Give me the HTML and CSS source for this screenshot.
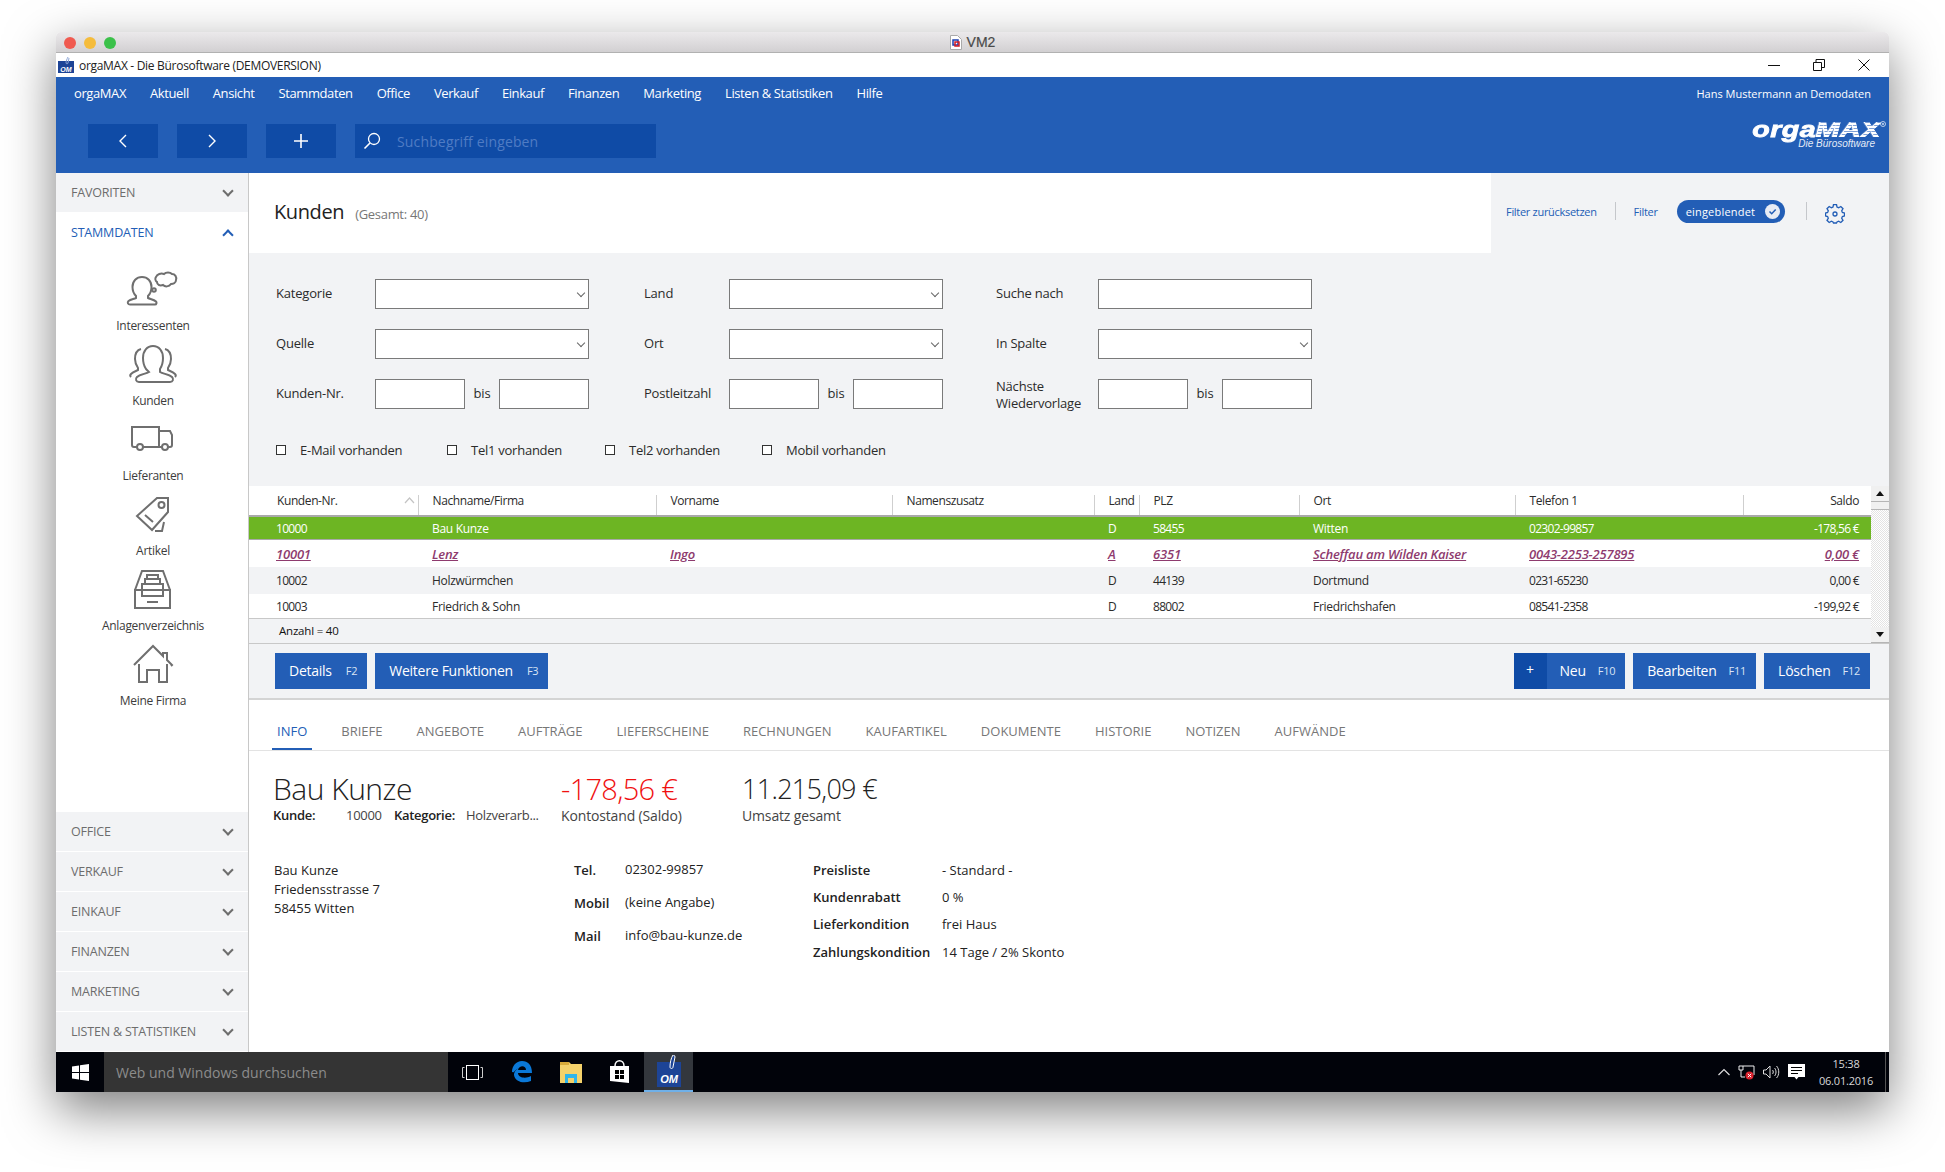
FILE: index.html
```html
<!DOCTYPE html>
<html lang="de">
  <head>
    <meta charset="UTF-8" />
    <title>orgaMAX - Kunden</title>
    <link rel="stylesheet" href="styles.css">
  </head>

  <body>
    <div class="window">
      <div class="mac-bar">
        <div class="lights">
          <span class="light red"></span>
          <span class="light yellow"></span>
          <span class="light green"></span>
        </div>
        <div class="mac-title">
          <svg width="12" height="15" viewBox="0 0 12 15"><path d="M.5.5h7l4 4v10H.5z" fill="#fff" stroke="#aaa"/><rect x="3" y="5" width="5" height="5" fill="none" stroke="#1d3fb0" stroke-width="1.5"/><rect x="5" y="7" width="4" height="4" fill="none" stroke="#d01c24" stroke-width="1.5"/></svg>
          VM2
        </div>
      </div>

      <div class="app-title">
        <svg class="app-logo" width="16" height="16" viewBox="0 0 16 16"><rect y="4" width="16" height="12" fill="#1d4496"/><path d="M10 0c-1 2-2 4-2 6 0 1 2 1 2 0l1-5" stroke="#8ea6d6" fill="none"/><text x="8" y="14.500" text-anchor="middle" class="om-text small">OM</text></svg>
        <span>orgaMAX - Die Bürosoftware (DEMOVERSION)</span>
        <div class="win-controls">
          <svg width="12" height="12" viewBox="0 0 12 12"><path d="M0 6.500h12" stroke="#111" fill="none"/></svg>
          <svg width="12" height="12" viewBox="0 0 12 12"><path d="M.5 3.500h8v8h-8zM3 3.500V.5h8.500v8H8.500" stroke="#111" fill="none"/></svg>
          <svg width="12" height="12" viewBox="0 0 12 12"><path d="M.5.5l11 11M11.500.5l-11 11" stroke="#111" fill="none"/></svg>
        </div>
      </div>

      <header class="app-header">
        <nav class="menu">
          <a>orgaMAX</a>
          <a>Aktuell</a>
          <a>Ansicht</a>
          <a>Stammdaten</a>
          <a>Office</a>
          <a>Verkauf</a>
          <a>Einkauf</a>
          <a>Finanzen</a>
          <a>Marketing</a>
          <a>Listen &amp; Statistiken</a>
          <a>Hilfe</a>
          <span class="user">Hans Mustermann an Demodaten</span>
        </nav>
        <div class="tools">
          <button class="tool-btn"><svg width="10" height="16" viewBox="0 0 10 16"><path d="M8 2L2 8l6 6" stroke="#fff" stroke-width="1.400" fill="none"/></svg></button>
          <button class="tool-btn"><svg width="10" height="16" viewBox="0 0 10 16"><path d="M2 2l6 6-6 6" stroke="#fff" stroke-width="1.400" fill="none"/></svg></button>
          <button class="tool-btn"><svg width="14" height="14" viewBox="0 0 14 14"><path d="M7 0v14M0 7h14" stroke="#fff" stroke-width="1.600" fill="none"/></svg></button>
          <div class="search">
            <svg width="18" height="18" viewBox="0 0 18 18"><circle cx="11" cy="7" r="5.500" stroke="#fff" stroke-width="1.300" fill="none"/><path d="M7 11l-5.500 5.500" stroke="#fff" stroke-width="1.600" fill="none"/></svg>
            <span>Suchbegriff eingeben</span>
          </div>
          <div class="brand">
            <div class="brand-name">orga<span>MAX</span></div>
            <div class="brand-sub">Die Bürosoftware</div>
            <svg class="brand-reg" width="6" height="6" viewBox="0 0 6 6"><circle cx="3" cy="3" r="2.500" fill="none" stroke="#dfe8f6" stroke-width=".8"/><circle cx="3" cy="3" r=".9" fill="#dfe8f6"/></svg>
          </div>
        </div>
      </header>

      <div class="workspace">
        <aside class="sidebar">
          <div class="side-group">
            <div class="side-head">FAVORITEN <i class="chev"></i></div>
            <div class="side-head open">STAMMDATEN <i class="chev up"></i></div>
            <div class="side-items">
              <a class="side-item">
                <svg class="side-icon" viewBox="0 0 64 48"><path d="M15 30c-2-2-3.500-5-3.500-9 0-6 4-10 9.500-10s9.500 4 9.500 10c0 4-1.500 7-3.500 9v2c2 1 6 1.500 8 3.500 1 1 .5 3-1 3H9c-2 0-3-2-1.500-3.500C9.500 33.500 13 33 15 32z"/><path d="M35 11c1-3 5-4 8-3 2-2 6-2 8 0 3 0 5 3 4 6 0 3-3 4-5 4-2 3-6 3-8 1-3 1-6 0-6-3-2-1-2-4-1-5z"/><circle cx="33" cy="24" r="1.800"/></svg>
                <span>Interessenten</span>
              </a>
              <a class="side-item">
                <svg class="side-icon" viewBox="0 0 64 48"><path d="M25 28c-2-3-3-6-3-11 0-7 4-12 10-12s10 5 10 12c0 5-1 8-3 11v3c3 2 9 2 12 5 2 2 1 5-2 5H18c-3 0-4-3-2-5 3-3 9-3 12-5z"/><path d="M20 8c-4 1-6 5-6 10 0 4 1 6 3 9v2c-2 1-5 2-7 4-1 1-1 2 0 3"/><path d="M44 8c4 1 6 5 6 10 0 4-1 6-3 9v2c2 1 5 2 7 4 1 1 1 2 0 3"/></svg>
                <span>Kunden</span>
              </a>
              <a class="side-item">
                <svg class="side-icon" viewBox="0 0 64 48"><path d="M16 31h-3c-1 0-2-1-2-2V11h27v20H22"/><path d="M38 15h11l2 4v10c0 1-1 2-2 2h-2M41 31h-19M38 31h3"/><circle cx="19" cy="31" r="3"/><circle cx="44" cy="31" r="3"/></svg>
                <span>Lieferanten</span>
              </a>
              <a class="side-item">
                <svg class="side-icon" viewBox="0 0 64 48"><path d="M36 7h11v14L31 39 16 25z"/><circle cx="40.500" cy="14" r="3"/><path d="M24 24l8 7M34 40h7l2-9"/></svg>
                <span>Artikel</span>
              </a>
              <a class="side-item">
                <svg class="side-icon" viewBox="0 0 64 48"><path d="M14 24h35v18H14zM14 24l7-19h21l7 19"/><path d="M21 24v-6h21v6M24 18v-5h15v5M26 13V9h11v4M21 24v6h21v-6M26 36h11"/></svg>
                <span>Anlagenverzeichnis</span>
              </a>
              <a class="side-item">
                <svg class="side-icon" viewBox="0 0 64 48"><path d="M18 23v18h8V29h12v12h8V23"/><path d="M13 24L32 5l10 10v-3h4v7l5 5-1 1"/></svg>
                <span>Meine Firma</span>
              </a>
            </div>
          </div>
          <div class="side-group">
            <div class="side-head">OFFICE <i class="chev"></i></div>
            <div class="side-head">VERKAUF <i class="chev"></i></div>
            <div class="side-head">EINKAUF <i class="chev"></i></div>
            <div class="side-head">FINANZEN <i class="chev"></i></div>
            <div class="side-head">MARKETING <i class="chev"></i></div>
            <div class="side-head">LISTEN &amp; STATISTIKEN <i class="chev"></i></div>
          </div>
        </aside>

        <main class="content">
          <div class="page-head">
            <div class="page-title">
              <h1>Kunden</h1>
              <span>(Gesamt: 40)</span>
            </div>
            <div class="page-tools">
              <a>Filter zurücksetzen</a>
              <i class="sep"></i>
              <a class="filter-link">Filter</a>
              <span class="pill">eingeblendet
                <svg width="15" height="15" viewBox="0 0 15 15"><circle cx="7.500" cy="7.500" r="7.500" fill="#e8ecf4"/><path d="M4.500 7.500l2.200 2.200 4-4.200" stroke="#235eb6" stroke-width="1.500" fill="none"/></svg>
              </span>
              <i class="sep second"></i>
              <svg class="gear" width="20" height="20" viewBox="0 0 20 20"><path d="M8.500 1h3l.5 2.500 1.600.7L15.800 3 18 5.200l-1.300 2.200.7 1.600 2.100.5v3l-2.100.5-.7 1.600L18 16.800 15.800 19l-2.200-1.300-1.600.7-.5 1.100h-3l-.5-1.100-1.600-.7L4.200 19 2 16.800l1.300-2.200-.7-1.600-2.100-.5v-3l2.100-.5.7-1.600L2 5.200 4.200 3l2.200 1.200L8 3.500z" transform="translate(0 -.5)" stroke="#235eb6" stroke-width="1.300" fill="none"/><circle cx="10" cy="10" r="2" stroke="#235eb6" stroke-width="1.300" fill="none"/></svg>
            </div>
          </div>

          <form class="filter">
            <div class="filter-grid">
              <label>Kategorie</label>
              <div class="select"><select></select></div>
              <i></i>
              <label>Land</label>
              <div class="select"><select></select></div>
              <i></i>
              <label>Suche nach</label>
              <input type="text" />

              <label>Quelle</label>
              <div class="select"><select></select></div>
              <i></i>
              <label>Ort</label>
              <div class="select"><select></select></div>
              <i></i>
              <label>In Spalte</label>
              <div class="select"><select></select></div>

              <label>Kunden-Nr.</label>
              <div class="range"><input type="text" /><span>bis</span><input type="text" /></div>
              <i></i>
              <label>Postleitzahl</label>
              <div class="range"><input type="text" /><span>bis</span><input type="text" /></div>
              <i></i>
              <label class="two-lines">Nächste Wiedervorlage</label>
              <div class="range"><input type="text" /><span>bis</span><input type="text" /></div>
            </div>
            <div class="checks">
              <label><i class="box"></i>E-Mail vorhanden</label>
              <label><i class="box"></i>Tel1 vorhanden</label>
              <label><i class="box"></i>Tel2 vorhanden</label>
              <label><i class="box"></i>Mobil vorhanden</label>
            </div>
          </form>

          <div class="grid-wrap">
            <div class="grid-main">
              <table class="grid">
                <colgroup>
                  <col class="c1" /><col class="c2" /><col class="c3" /><col class="c4" /><col class="c5" /><col class="c6" /><col class="c7" /><col class="c8" /><col class="c9" />
                </colgroup>
                <thead>
                  <tr>
                    <th>Kunden-Nr.<svg class="sort" width="11" height="7" viewBox="0 0 11 7"><path d="M1 6l4.500-5L10 6" stroke="#c4c4c4" stroke-width="1.200" fill="none"/></svg></th>
                    <th>Nachname/Firma</th>
                    <th>Vorname</th>
                    <th>Namenszusatz</th>
                    <th>Land</th>
                    <th>PLZ</th>
                    <th>Ort</th>
                    <th>Telefon 1</th>
                    <th class="num">Saldo</th>
                  </tr>
                </thead>
                <tbody>
                  <tr class="sel">
                    <td>10000</td><td>Bau Kunze</td><td></td><td></td><td>D</td><td>58455</td><td>Witten</td><td>02302-99857</td><td class="num">-178,56 €</td>
                  </tr>
                  <tr class="mark">
                    <td>10001</td><td>Lenz</td><td>Ingo</td><td></td><td>A</td><td>6351</td><td>Scheffau am Wilden Kaiser</td><td>0043-2253-257895</td><td class="num">0,00 €</td>
                  </tr>
                  <tr class="alt">
                    <td>10002</td><td>Holzwürmchen</td><td></td><td></td><td>D</td><td>44139</td><td>Dortmund</td><td>0231-65230</td><td class="num">0,00 €</td>
                  </tr>
                  <tr class="last">
                    <td>10003</td><td>Friedrich &amp; Sohn</td><td></td><td></td><td>D</td><td>88002</td><td>Friedrichshafen</td><td>08541-2358</td><td class="num">-199,92 €</td>
                  </tr>
                </tbody>
              </table>
              <div class="grid-foot">Anzahl = 40</div>
            </div>
            <div class="scrollbar">
              <div class="sb-btn"><i class="tri up"></i></div>
              <div class="sb-thumb"></div>
              <div class="sb-track"></div>
              <div class="sb-btn"><i class="tri"></i></div>
            </div>
          </div>

          <div class="actions">
            <div class="btn-group">
              <button class="btn">Details <small>F2</small></button>
              <button class="btn">Weitere Funktionen <small>F3</small></button>
            </div>
            <div class="btn-group end">
              <button class="btn btn-new"><b>+</b>Neu <small>F10</small></button>
              <button class="btn">Bearbeiten <small>F11</small></button>
              <button class="btn">Löschen <small>F12</small></button>
            </div>
          </div>

          <nav class="tabs">
            <a class="active">INFO</a>
            <a>BRIEFE</a>
            <a>ANGEBOTE</a>
            <a>AUFTRÄGE</a>
            <a>LIEFERSCHEINE</a>
            <a>RECHNUNGEN</a>
            <a>KAUFARTIKEL</a>
            <a>DOKUMENTE</a>
            <a>HISTORIE</a>
            <a>NOTIZEN</a>
            <a>AUFWÄNDE</a>
          </nav>

          <section class="detail">
            <div class="summary">
              <div class="sum-name">
                <h2>Bau Kunze</h2>
                <div class="sum-meta"><b>Kunde:</b><span>10000</span><b>Kategorie:</b><span>Holzverarb...</span></div>
              </div>
              <div class="sum-value balance">
                <strong>-178,56 €</strong>
                <span>Kontostand (Saldo)</span>
              </div>
              <div class="sum-value">
                <strong>11.215,09 €</strong>
                <span>Umsatz gesamt</span>
              </div>
            </div>
            <div class="facts">
              <div class="address">Bau Kunze<br />Friedensstrasse 7<br />58455 Witten</div>
              <dl class="contact">
                <dt>Tel.</dt><dd>02302-99857</dd>
                <dt>Mobil</dt><dd>(keine Angabe)</dd>
                <dt>Mail</dt><dd>info@bau-kunze.de</dd>
              </dl>
              <dl class="terms">
                <dt>Preisliste</dt><dd>- Standard -</dd>
                <dt>Kundenrabatt</dt><dd>0 %</dd>
                <dt>Lieferkondition</dt><dd>frei Haus</dd>
                <dt>Zahlungskondition</dt><dd>14 Tage / 2% Skonto</dd>
              </dl>
            </div>
          </section>
        </main>
      </div>

      <footer class="taskbar">
        <div class="start">
          <svg width="17" height="17" viewBox="0 0 17 17"><path d="M0 2.500l7-1v6.500H0zM8 1.300L17 0v8H8zM0 9h7v6.500l-7-1zM8 9h9v8l-9-1.300z" fill="#fff"/></svg>
        </div>
        <div class="task-search">Web und Windows durchsuchen</div>
        <div class="task-icons">
          <span class="task-icon"><svg width="21" height="15" viewBox="0 0 21 15"><rect x="4.500" y=".5" width="12" height="14" fill="none" stroke="#fff"/><path d="M2.500 2.500H.5v10h2M18.500 2.500h2v10h-2" fill="none" stroke="#ccc"/></svg></span>
          <span class="task-icon"><svg width="21" height="22" viewBox="0 0 21 22"><path d="M1 11C1 5 5 0 11 0c6 0 10 4 10 12H7c0 5 8 6 13 3v5c-7 3-16 1-17-6 0-2 1-5 5-7-2 1-4 2-5 4-.500.500-2 0-2 0zM7 9h8c0-5-7-5-8 0z" fill="#0a78d7"/></svg></span>
          <span class="task-icon"><svg width="22" height="22" viewBox="0 0 22 22"><path d="M0 1h9l2 2h11v19H0z" fill="#f4d26b"/><path d="M0 1h9v3H0z" fill="#d8ab3a"/><path d="M5 22v-9h12v9h-3v-5H8v5z" fill="#2fb5ea"/></svg></span>
          <span class="task-icon"><svg width="21" height="24" viewBox="0 0 21 24"><path d="M1 6h19v17l-19-2z" fill="#fff"/><path d="M6 6c0-7 9-7 9 0" fill="none" stroke="#fff" stroke-width="1.500"/><path d="M6 10h4v4H6zM11 10h4v4h-4zM6 15h4v4H6zM11 15h4v4h-4z" fill="#000"/></svg></span>
          <span class="task-icon current"><svg width="24" height="32" viewBox="0 0 24 32"><rect y="7" width="24" height="25" fill="#1d4496"/><path d="M16 0c-2 3-3 8-3 12 0 2 3 2 3 0l2-10c0-2-2-2-2-2z" fill="#1d4496" stroke="#fff"/><text x="12" y="28" text-anchor="middle" class="om-text">OM</text></svg></span>
        </div>
        <div class="tray">
          <svg width="12" height="8" viewBox="0 0 12 8"><path d="M.5 7L6 1.500 11.500 7" stroke="#ddd" stroke-width="1.200" fill="none"/></svg>
          <svg width="17" height="15" viewBox="0 0 17 15"><path d="M5 1h11v9M1 1h4v4H1zM3 5v7h4" stroke="#eee" fill="none"/><circle cx="11.500" cy="10.500" r="4" fill="#d9202c"/><path d="M9.800 8.800l3.400 3.400M13.200 8.800l-3.400 3.400" stroke="#fff"/></svg>
          <svg width="17" height="14" viewBox="0 0 17 14"><path d="M.5 5h2.500l4-4v12l-4-4H.5zM9.500 5c1 1 1 3 0 4M11.500 3c2 2 2 6 0 8M13.500 1c3 3 3 9 0 12" stroke="#ddd" fill="none"/></svg>
          <svg width="17" height="16" viewBox="0 0 17 16"><path d="M0 0h17v13h-6.500l-2 2.500-2-2.500H0z" fill="#fff"/><path d="M3 3.500h11M3 6.500h11M3 9.500h7" stroke="#000"/></svg>
          <div class="clock">15:38<br />06.01.2016</div>
          <i class="show-desktop"></i>
        </div>
      </footer>
    </div>
  </body>
</html>
```

FILE: styles.css
```css
* {
  box-sizing: border-box;
}

html,
body {
  height: 100%;
  overflow: hidden;
}

body {
  margin: 0;
  padding: 32px 56px 0;
  background: #fff;
  font-family: "Open Sans", "Noto Sans", sans-serif;
  font-size: 12px;
  color: #2b2b2b;
}

.window {
  width: 1833px;
  height: 1060px;
  display: flex;
  flex-direction: column;
  border-radius: 5px 5px 0 0;
  box-shadow: 0 18px 50px rgba(0, 0, 0, 0.5);
}

/* mac title bar */
.mac-bar {
  height: 21px;
  flex: none;
  display: flex;
  align-items: center;
  justify-content: center;
  border-radius: 5px 5px 0 0;
  border-bottom: 1px solid #b1b1b1;
  background: linear-gradient(#ebe9eb, #d2d0d2);
  position: relative;
}

.lights {
  position: absolute;
  left: 8px;
  top: 5px;
  display: flex;
  gap: 8px;
}

.light {
  width: 12px;
  height: 12px;
  border-radius: 50%;
}

.red {
  background: #f05a50;
}

.yellow {
  background: #f5bc3c;
}

.green {
  background: #3bc14a;
}

.mac-title {
  display: flex;
  align-items: center;
  gap: 5px;
  font-family: "Liberation Sans", sans-serif;
  font-size: 14px;
  color: #4a4a4a;
  -webkit-text-stroke: 0.2px #4a4a4a;
}

/* windows title bar */
.app-title {
  height: 24px;
  flex: none;
  display: flex;
  align-items: center;
  padding-left: 2px;
  gap: 5px;
  background: #fff;
  font-size: 12px;
  letter-spacing: -0.3px;
  color: #222;
}

.om-text {
  font-family: "Liberation Sans", sans-serif;
  font-size: 11px;
  font-weight: bold;
  font-style: italic;
  fill: #fff;
  letter-spacing: 0;
}

.om-text.small {
  font-size: 7px;
}

.win-controls {
  margin-left: auto;
  display: flex;
  gap: 33px;
  padding-right: 19px;
}

/* blue header */
.app-header {
  height: 96px;
  flex: none;
  background: #235eb6;
  color: #fff;
}

.menu {
  height: 47px;
  display: flex;
  align-items: center;
  padding: 0 18px 15px;
  gap: 24px;
  font-size: 13px;
  letter-spacing: -0.4px;
}

.user {
  margin-left: auto;
  font-size: 11px;
  letter-spacing: 0;
}

.tools {
  display: flex;
  gap: 19px;
  padding-left: 32px;
  align-items: flex-start;
}

.tool-btn {
  width: 70px;
  height: 34px;
  border: 0;
  padding: 0;
  background: #0f4ba6;
  display: flex;
  align-items: center;
  justify-content: center;
}

.search {
  width: 301px;
  height: 34px;
  background: #0f4ba6;
  display: flex;
  align-items: center;
  gap: 16px;
  padding-left: 8px;
  color: #4f7cc4;
  font-size: 14px;
  letter-spacing: 0.15px;
}

.brand {
  margin-left: auto;
  padding-right: 8px;
  margin-top: -3px;
  text-align: right;
  font-family: "Liberation Sans", sans-serif;
  font-style: italic;
  position: relative;
}

.brand-name {
  font-size: 22px;
  font-weight: bold;
  line-height: 17px;
  letter-spacing: 0.4px;
  -webkit-text-stroke: 0.8px #fff;
  transform: scaleX(1.3);
  transform-origin: right center;
}

.brand-name span {
  -webkit-text-stroke: 0;
  background: repeating-linear-gradient(#fff 0 2px, #7fa0d6 2px 3px);
  -webkit-background-clip: text;
  background-clip: text;
  color: transparent;
  filter: drop-shadow(0.5px 0 0 #fff) drop-shadow(-0.5px 0 0 #fff);
}

.brand-sub {
  font-size: 10px;
  padding-right: 6px;
  line-height: 10px;
  margin-top: 1px;
  color: #e4ebf7;
}

.brand-reg {
  position: absolute;
  right: 3px;
  top: 0;
}

/* body area */
.workspace {
  flex: 1;
  min-height: 0;
  display: flex;
}

.sidebar {
  width: 193px;
  flex: none;
  display: flex;
  flex-direction: column;
  justify-content: space-between;
  border-right: 1px solid #c8c8c8;
  background: #fff;
}

.side-head {
  height: 40px;
  display: flex;
  align-items: center;
  justify-content: space-between;
  padding: 0 14px 0 15px;
  background: #f2f3f5;
  border-bottom: 1px solid #fff;
  color: #6d6d6d;
  font-size: 12.500px;
  letter-spacing: -0.2px;
}

.side-head.open {
  background: #fff;
  color: #235eb6;
}

.chev {
  width: 8px;
  height: 8px;
  margin: -4px 2px 0 0;
  border: solid #6d6d6d;
  border-width: 0 2px 2px 0;
  transform: rotate(45deg);
}

.chev.up {
  margin-top: 4px;
  border-color: #235eb6;
  transform: rotate(-135deg);
}

.side-items {
  padding-top: 11px;
}

.side-item {
  height: 75px;
  display: flex;
  flex-direction: column;
  align-items: center;
  padding: 2px 0 0 2px;
  color: #3c3c3c;
  font-size: 12px;
  letter-spacing: -0.3px;
}

.side-icon {
  width: 64px;
  height: 48px;
  margin-bottom: 3px;
  fill: none;
  stroke: #6f6f6f;
  stroke-width: 2;
}

.content {
  flex: 1;
  min-width: 0;
  display: flex;
  flex-direction: column;
  background: #fff;
}

.page-head {
  height: 80px;
  flex: none;
  display: flex;
  background: #f2f3f5;
}

.page-title {
  width: 1242px;
  background: #fff;
  display: flex;
  align-items: baseline;
  gap: 11px;
  padding: 25px 0 0 25px;
}

.page-title h1 {
  margin: 0;
  font-size: 20px;
  font-weight: 400;
  letter-spacing: -0.4px;
  color: #222;
}

.page-title span {
  color: #777;
  font-size: 13px;
  letter-spacing: -0.3px;
}

.page-tools {
  flex: 1;
  display: flex;
  align-items: center;
  padding: 0 0 4px 15px;
  color: #235eb6;
  font-size: 11px;
  letter-spacing: -0.3px;
}

.sep {
  width: 1px;
  height: 18px;
  background: #c5c7cb;
  margin: 0 18px;
}

.sep.second {
  margin: 0 16px 0 21px;
}

.pill {
  height: 23px;
  width: 108px;
  margin-left: 19px;
  border-radius: 12px;
  background: #235eb6;
  color: #fff;
  display: flex;
  align-items: center;
  justify-content: space-between;
  padding: 0 5px 0 9px;
  letter-spacing: 0.2px;
}

.gear {
  margin: 6px 0 0 2px;
}

.filter {
  height: 233px;
  flex: none;
  padding: 26px 0 0 27px;
  background: #f2f3f5;
}

.filter-grid {
  display: grid;
  grid-template-columns: 99px 214px 55px 85px 214px 53px 102px 214px;
  grid-auto-rows: 30px;
  row-gap: 20px;
  align-items: center;
  font-size: 13px;
  letter-spacing: -0.2px;
}

.filter-grid label {
  line-height: 17px;
  margin-top: -2px;
}

.filter-grid .two-lines {
  margin-top: 1px;
}

.filter-grid input,
.select select {
  width: 100%;
  height: 30px;
  margin: 0;
  border: 1px solid #7a7a7a;
  border-radius: 0;
  background: #fff;
  appearance: none;
  display: block;
}

.select {
  position: relative;
}

.select::after {
  content: "";
  position: absolute;
  right: 5px;
  top: 11px;
  width: 5px;
  height: 5px;
  border: solid #666;
  border-width: 0 1px 1px 0;
  transform: rotate(45deg);
}

.range {
  display: flex;
  align-items: center;
  justify-content: space-between;
}

.range span {
  margin-top: -2px;
}

.range input {
  width: 90px !important;
}

.checks {
  display: grid;
  grid-template-columns: 171px 158px 157px auto;
  margin-top: 32px;
  font-size: 13px;
  letter-spacing: -0.25px;
}

.checks label {
  display: flex;
  align-items: center;
  gap: 14px;
}

.box {
  width: 10px;
  height: 10px;
  border: 1px solid #333;
  background: #fff;
}

/* table */
.grid-wrap {
  height: 157px;
  flex: none;
  display: flex;
}

.grid-main {
  width: 1622px;
  flex: none;
  background: #f2f3f5;
}

.grid {
  width: 1622px;
  table-layout: fixed;
  border-collapse: separate;
  border-spacing: 0;
  font-size: 12px;
  letter-spacing: -0.3px;
}

.c1 {
  width: 170px;
}

.c2 {
  width: 238px;
}

.c3 {
  width: 236px;
}

.c4 {
  width: 202px;
}

.c5 {
  width: 45px;
}

.c6 {
  width: 160px;
}

.c7 {
  width: 216px;
}

.c8 {
  width: 228px;
}

.c9 {
  width: 127px;
}

.grid th {
  height: 31px;
  padding: 0 0 0 13.500px;
  font-weight: 400;
  text-align: left;
  letter-spacing: -0.4px;
  background: #fff;
  border-bottom: 2px solid #a9a9a9;
  position: relative;
  color: #2b2b2b;
}

.grid th:first-child {
  padding-left: 28px;
}

.grid th::after {
  content: "";
  position: absolute;
  right: 0;
  bottom: 0;
  width: 1px;
  height: 20px;
  background: #cfcfcf;
}

.grid th:last-child::after {
  display: none;
}

.sort {
  position: absolute;
  right: 4px;
  top: 11px;
}

.grid td {
  padding: 0 0 0 13px;
  white-space: nowrap;
  overflow: visible;
}

.grid td:first-child {
  padding-left: 27px;
}

/* the digits of the original font are narrow */
.grid td:nth-child(1),
.grid td:nth-child(6),
.grid td:nth-child(8),
.grid td:nth-child(9) {
  letter-spacing: -0.7px;
}

.grid .num,
.grid th.num {
  text-align: right;
  padding: 0 12px 0 0;
}

.sel td {
  height: 23px;
  background: #6db523;
  color: #fff;
  border-bottom: 1px solid #a9a9a9;
}

.grid .mark td {
  height: 27px;
  background: #fff;
  color: #8e3b6e;
  font-size: 13px;
  font-weight: 600;
  font-style: italic;
  letter-spacing: -0.2px;
  text-decoration: underline;
}

.alt td {
  height: 27px;
  background: #f2f3f5;
}

.last td {
  height: 25px;
  background: #fff;
  border-bottom: 1px solid #c8c8c8;
}

.grid-foot {
  height: 24px;
  padding: 4px 0 0 30px;
  font-size: 11.500px;
  letter-spacing: -0.2px;
  color: #111;
}

.scrollbar {
  flex: 1;
  display: flex;
  flex-direction: column;
  background: #fff;
}

.sb-btn {
  height: 16px;
  flex: none;
  background: #f0f0f0;
  border-bottom: 1px solid #b5b5b5;
  display: flex;
  align-items: center;
  justify-content: center;
}

.sb-thumb {
  height: 8px;
  flex: none;
  background: #f0f0f0;
  border-bottom: 1px solid #b5b5b5;
}

.sb-track {
  flex: 1;
  background: repeating-conic-gradient(#e3e3e3 0 25%, #fff 0 50%) 0 0 / 2px 2px;
}

.tri {
  width: 0;
  height: 0;
  border: 4px solid transparent;
  border-bottom: 0;
  border-top: 5px solid #111;
}

.tri.up {
  border-top: 0;
  border-bottom: 5px solid #111;
}

.actions {
  height: 57px;
  flex: none;
  display: flex;
  justify-content: space-between;
  padding: 9px 19px 0 26px;
  background: #f2f3f5;
  border-top: 1px solid #c8c8c8;
  border-bottom: 2px solid #d4d4d4;
}

.btn-group {
  display: flex;
  gap: 8px;
}

.btn {
  height: 36px;
  flex: none;
  border: 0;
  padding: 0 10px 2px 14px;
  background: #235eb6;
  color: #fff;
  font-family: inherit;
  font-size: 14px;
  letter-spacing: -0.25px;
  display: flex;
  align-items: center;
}

.btn small {
  margin-left: 14px;
  font-size: 11px;
  color: #d9e4f5;
}

.end .btn small {
  margin-left: 12px;
}

.btn-new {
  padding-left: 0;
}

.btn-new b {
  width: 33px;
  height: 36px;
  flex: none;
  margin: 0 13px -2px 0;
  background: #0f4ba6;
  font-weight: 400;
  line-height: 34px;
}

.tabs {
  height: 51px;
  flex: none;
  display: flex;
  gap: 34px;
  padding: 0 0 0 28px;
  border-bottom: 1px solid #e3e3e3;
  color: #777;
  font-size: 13px;
}

.tabs a {
  padding-top: 22px;
  height: 50px;
}

.tabs .active {
  color: #235eb6;
  margin: 0 -5px;
  padding: 22px 5px 0;
  border-bottom: 2px solid #235eb6;
}

.detail {
  flex: 1;
  min-height: 0;
  padding: 20px 0 0 25px;
  color: #222;
}

.summary {
  display: flex;
  height: 63px;
}

.sum-name {
  width: 288px;
  margin-left: -1px;
  padding-right: 1px;
}

.sum-name h2 {
  margin: 0;
  font-size: 30px;
  font-weight: 300;
  line-height: 36px;
  letter-spacing: -0.5px;
}

.sum-meta {
  display: grid;
  grid-template-columns: 73px 48px 72px auto;
  margin-top: -1px;
  font-size: 13px;
  letter-spacing: -0.3px;
  color: #444;
}

.sum-meta b {
  font-weight: 600;
  color: #222;
}

.sum-value {
  width: 181px;
  display: flex;
  flex-direction: column;
}

.sum-value strong {
  font-size: 27px;
  font-weight: 300;
  line-height: 36px;
  letter-spacing: -0.7px;
}

.sum-value span {
  margin-top: -1px;
  font-size: 14px;
  letter-spacing: -0.15px;
  color: #444;
}

.balance strong {
  font-size: 29px;
  color: #f01010;
}

.facts {
  display: flex;
  margin-top: 27px;
  font-size: 13px;
}

.address {
  width: 300px;
  line-height: 19px;
}

.contact,
.terms {
  margin: 0;
  display: grid;
  align-content: start;
}

.contact {
  width: 239px;
  grid-template-columns: 51px auto;
  grid-auto-rows: 33px;
  line-height: 19px;
}

.contact dd {
  margin-top: -1px;
}

.terms {
  grid-template-columns: 129px auto;
  grid-auto-rows: 27.200px;
  line-height: 19px;
}

.facts dt {
  font-weight: 600;
}

.facts dd {
  margin-left: 0;
  margin-right: 0;
  margin-bottom: 0;
}

/* windows taskbar */
.taskbar {
  height: 40px;
  flex: none;
  display: flex;
  background: #01030a;
  color: #ddd;
}

.start {
  width: 48px;
  display: flex;
  align-items: center;
  justify-content: center;
}

.task-search {
  width: 344px;
  background: #343434;
  color: #8c8c8c;
  font-size: 14px;
  line-height: 41px;
  padding-left: 12px;
}

.task-icons {
  display: flex;
}

.task-icon {
  width: 49px;
  display: flex;
  align-items: center;
  justify-content: center;
}

.task-icon.current {
  background: #33373d;
  border-bottom: 2px solid #6fb0e8;
}

.tray {
  margin-left: auto;
  display: flex;
  align-items: center;
  gap: 8px;
}

.clock {
  width: 62px;
  margin: 0 0 0 2px;
  text-align: center;
  font-size: 11px;
  letter-spacing: -0.2px;
  line-height: 17px;
  color: #d8d8d8;
}

.show-desktop {
  width: 1px;
  height: 40px;
  background: #555;
  margin-right: 3px;
}
```
